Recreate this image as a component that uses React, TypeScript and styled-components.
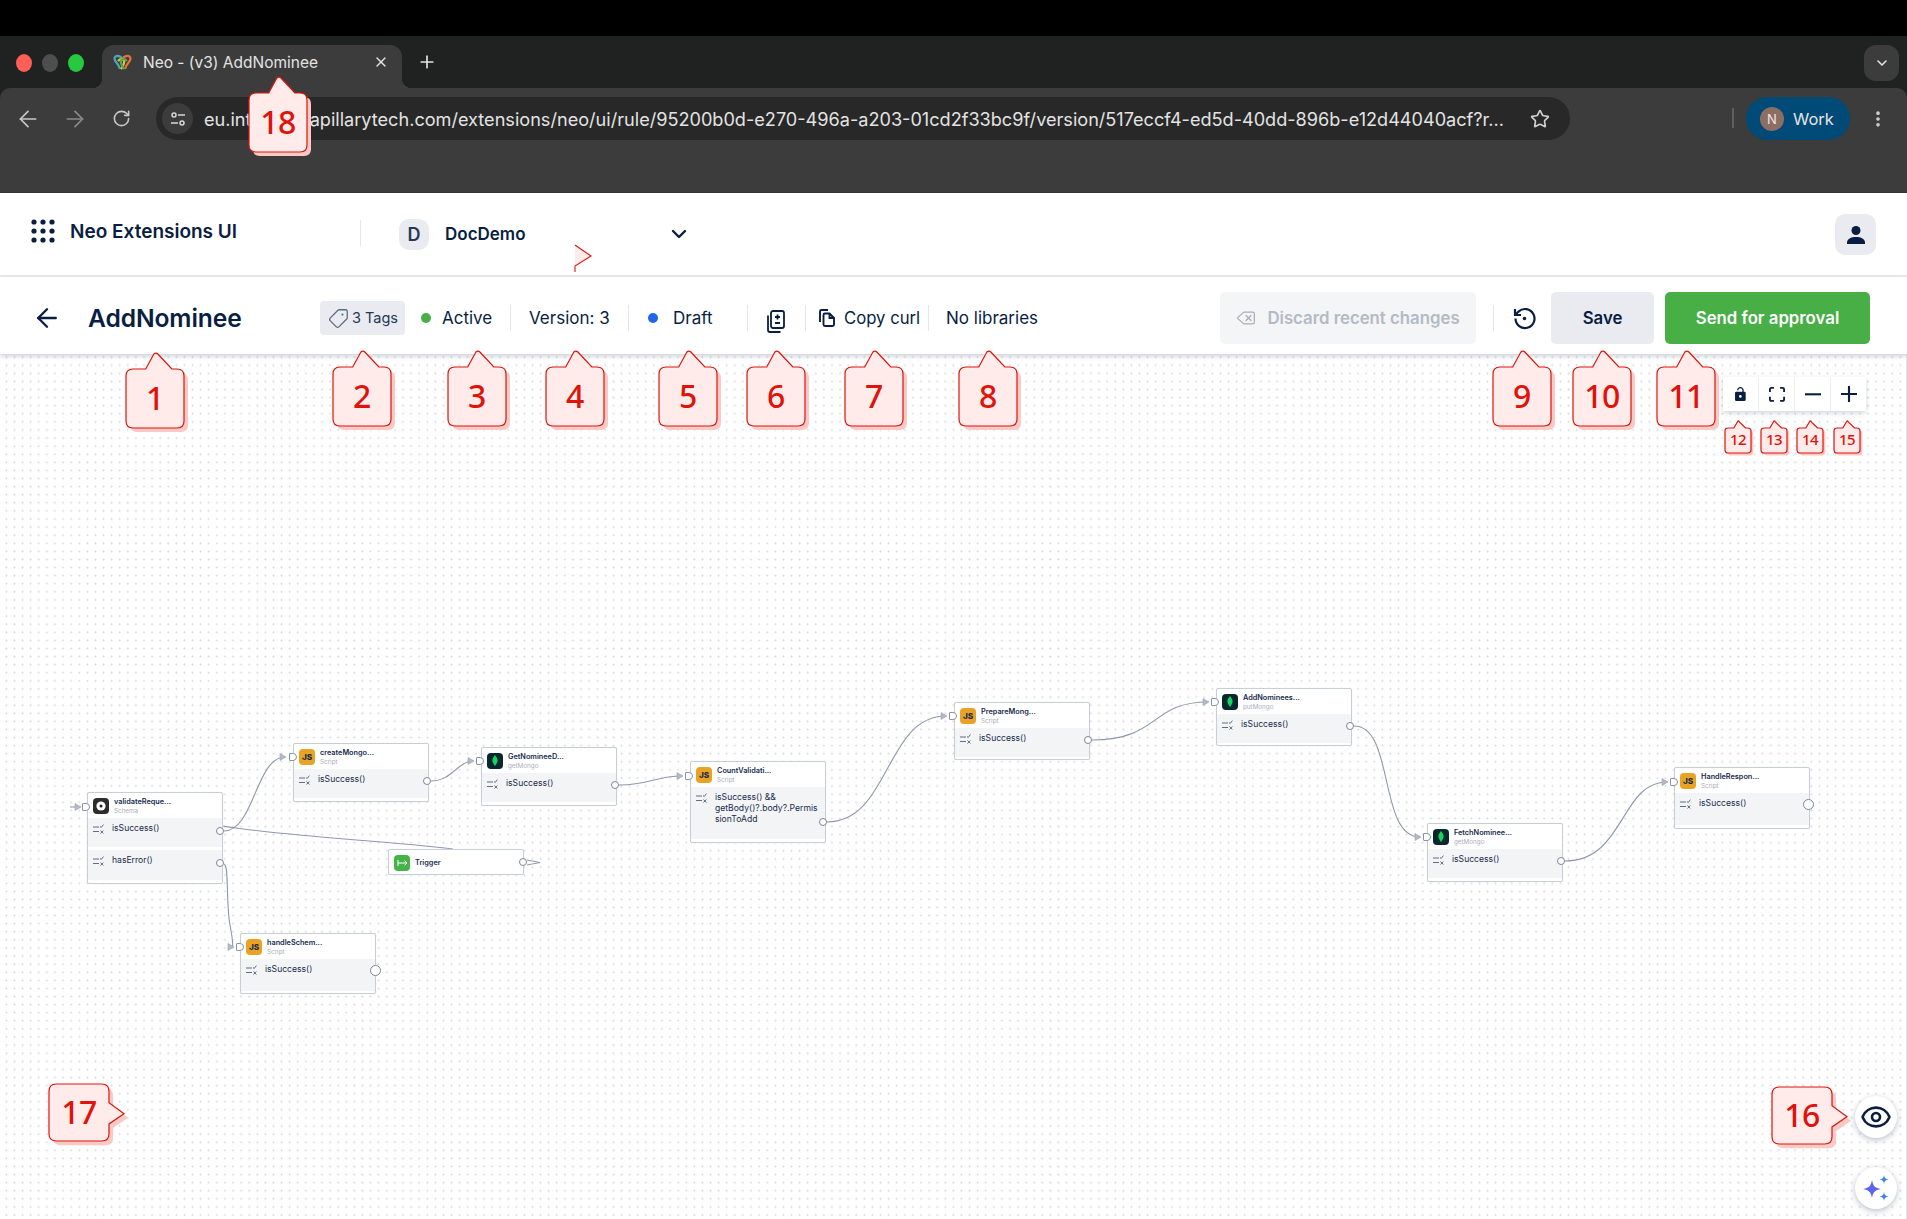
import React from "react";
import styled, { createGlobalStyle, css } from "styled-components";
import { ArrowLeft, ArrowRight, RotateCw, Star, X, Plus, ChevronDown, EllipsisVertical, Tag, Eye, Delete } from "lucide-react";

const NAVY = "#091e42";
const Global = createGlobalStyle`
  html, body { margin: 0; padding: 0; background: #fff; }
  body { font-family: "Inter", "Liberation Sans", sans-serif; color: ${NAVY}; }
  * { box-sizing: border-box; }
`;

const Page = styled.div`
  position: relative; width: 1907px; height: 1219px; overflow: hidden;
  display: flex; flex-direction: column; background: #fff;
`;
const BlackBar = styled.div`height: 36px; background: #000; flex: none;`;
const BrowserChrome = styled.div`flex: none; background: #202221;`;
const TabStrip = styled.div`
  height: 52px; display: flex; align-items: flex-end;
  padding: 0 8px 0 102px; position: relative;
`;
const Lights = styled.div`position: absolute; left: 16px; top: 18px; display: flex; gap: 10px;`;
const Light = styled.span<{ $c: string }>`width: 16px; height: 18px; border-radius: 50%; background: ${p => p.$c};`;
const TabItem = styled.div`
  position: relative; width: 300px; height: 43px; background: #3c3c3c; border-radius: 12px 12px 0 0;
  display: flex; align-items: center; padding: 0 13px 9px 11px; color: #e3e3e3;
  font: 400 15.5px "Inter", "Liberation Sans", sans-serif;
  &::before, &::after { content: ""; position: absolute; bottom: 0; width: 10px; height: 10px; }
  &::before { left: -10px; background: radial-gradient(circle at 0 0, #202221 10px, #3c3c3c 10.5px); }
  &::after { right: -10px; background: radial-gradient(circle at 100% 0, #202221 10px, #3c3c3c 10.5px); }
`;
const TabTitle = styled.span`flex: 1; margin-left: 11px;`;
const NewTab = styled.span`display: flex; margin: 0 0 16px 15px; align-self: flex-end; color: #e3e3e3;`;
const TabMenu = styled.div`
  margin-left: auto; align-self: flex-start; margin-top: 9px; width: 35px; height: 36px; border-radius: 12px;
  background: #3c3c3c; color: #e3e3e3; display: flex; align-items: center; justify-content: center;
`;
const Toolbar = styled.div`
  height: 105px; background: #3c3c3c; display: flex; align-items: flex-start; border-radius: 10px 10px 0 0;
  padding: 9px 0 0 0; color: #c7c7c7; border-bottom: 1px solid #333; position: relative;
`;
const NavSlot = styled.span<{ $dim?: boolean }>`
  width: 46.5px; height: 43px; display: flex; align-items: center; justify-content: center; flex: none;
  color: ${p => (p.$dim ? "#8a8a8a" : "#c7c7c7")};
`;
const Nav = styled.div`display: flex; padding-left: 5px; width: 156px;`;
const Omnibox = styled.div`
  width: 1414px; height: 43px; border-radius: 22px; background: #282828; display: flex; align-items: center;
  padding: 0 16px 0 6px; flex: none;
`;
const SiteInfo = styled.span`
  width: 31px; height: 31px; border-radius: 50%; background: #3c3c3c; display: flex; align-items: center; justify-content: center; flex: none;
`;
const Url = styled.span`
  margin-left: 11px; width: 1310px; white-space: nowrap; overflow: hidden; color: #e3e3e3;
  font: 400 18.13px "Inter", "Liberation Sans", sans-serif; flex: none;
`;
const StarSlot = styled.span`margin-left: 16px; display: flex; color: #d0d0d0;`;
const ToolSep = styled.span`width: 2px; height: 20px; background: #5e5e5e; margin: 11px 12px 0 162px; flex: none;`;
const Profile = styled.div`
  width: 104px; height: 43px; border-radius: 22px; background: #004a77; display: flex; align-items: center;
  padding-left: 14px; color: #e3e3e3; font: 400 16.5px "Inter", "Liberation Sans", sans-serif; flex: none;
`;
const ProfileAvatar = styled.span`
  width: 24px; height: 24px; border-radius: 50%; background: #8d6e63; color: #f1e7e3; font-size: 13px;
  display: flex; align-items: center; justify-content: center; margin-right: 9px;
`;
const MoreSlot = styled.span`margin-left: 18px; height: 43px; display: flex; align-items: center; color: #d0d0d0;`;

const Header = styled.header`
  height: 84px; flex: none; background: #fff; border-bottom: 2px solid #ebecf0; display: flex; align-items: flex-start;
  padding: 21px 31px 0 31px;
`;
const DotsSlot = styled.span`display: flex; margin-top: 5px;`;
const AppName = styled.div`
  margin-left: 15px; width: 291px; border-right: 1px solid #e4e6ea; height: 26px; margin-top: 6px; padding-top: 2px;
  font-weight: 600; font-size: 19px; line-height: 20px; color: ${NAVY};
`;
const Org = styled.div`margin-left: 38px; display: flex; align-items: center; height: 40px; width: 292px; font-weight: 600; font-size: 17px;`;
const OrgAvatar = styled.span`
  width: 30px; height: 31px; border-radius: 10px; background: #e9ebf0; display: flex; align-items: center; justify-content: center;
  margin-right: 16px; font-weight: 600; font-size: 18px; color: #253858;
`;
const OrgName = styled.span`flex: 1;`;
const UserBtn = styled.div`
  margin-left: auto; width: 41px; height: 41px; border-radius: 10px; background: #e9ebf0; display: flex; align-items: center; justify-content: center;
`;

const Bar = styled.div`
  height: 77px; flex: none; background: #fff; display: flex; align-items: center; padding: 5px 37px 0; position: relative; z-index: 2;
  box-shadow: 0 2px 5px rgba(9, 30, 66, 0.22);
`;
const BackSlot = styled.span`display: flex; width: 51px; flex: none; margin-left: -5px; margin-right: 5px;`;
const Title = styled.h1`margin: 0; width: 232px; flex: none; font-size: 24.6px; font-weight: 600; color: ${NAVY}; letter-spacing: -0.1px;`;
const TagChip = styled.div`
  width: 85px; height: 34px; border-radius: 4px; background: #e9ebf0; display: flex; align-items: center; gap: 3px;
  padding-left: 8px; font-size: 14.5px; line-height: 16px; color: #253858; flex: none; white-space: nowrap;
`;
const Meta = styled.div<{ $w: number; $pad: number; $last?: boolean }>`
  width: ${p => p.$w}px; padding-left: ${p => p.$pad}px; height: 26px; display: flex; align-items: center; flex: none; white-space: nowrap;
  font-size: 17px; font-weight: 400; color: ${NAVY};
  ${p => !p.$last && css`border-right: 1px solid #e4e6ea;`}
`;
const Dot = styled.span<{ $c: string }>`width: 10px; height: 10px; border-radius: 50%; background: ${p => p.$c}; margin-right: 11px; flex: none;`;
const DraftDot = styled(Dot)`margin-right: 15px;`;
const DocSvg = styled.svg`margin-top: 6px; flex: none;`;
const CopySvg = styled.svg`margin-right: 9px; flex: none;`;
const CopyText = styled.span`font-size: 16.7px;`;
const Actions = styled.div`margin-left: auto; display: flex; align-items: center;`;
const baseBtn = css`height: 52px; border-radius: 5px; display: flex; align-items: center; justify-content: center; font-size: 16.8px; font-weight: 600; flex: none;`;
const DiscardBtn = styled.div`
  ${baseBtn}; width: 256px; background: #f4f5f7; color: #b3bac5; gap: 11px;
`;
const ActSep = styled.span`width: 1px; height: 26px; background: #e4e6ea; margin: 0 18px 0 17px;`;
const HistSlot = styled.span`display: flex; width: 25px; margin-right: 14px;`;
const SaveBtn = styled.div`${baseBtn}; width: 103px; background: #e9ebf0; color: ${NAVY}; margin-right: 11px;`;
const SendBtn = styled.div`${baseBtn}; width: 205px; background: #47af46; color: #fff;`;

const Canvas = styled.main`
  position: relative; flex: 1; overflow: hidden;
  background-color: #fff;
  background-image: radial-gradient(circle, #d9dbde 0.8px, transparent 1.1px);
  background-size: 8.1px 8.1px;
  background-position: 2.35px -0.95px;
`;
const Edges = styled.svg`position: absolute; inset: 0; width: 100%; height: 100%;`;

const NodeBox = styled.div<{ $x: number; $y: number; $h: number }>`
  position: absolute; left: ${p => p.$x}px; top: ${p => p.$y}px; width: 136px; height: ${p => p.$h}px;
  background: #fff; border: 1px solid #c9cdd8; border-radius: 2px; box-shadow: 0 0 1px #dfe1e6;
`;
const NodeHead = styled.div`height: 25px; display: flex; align-items: center; padding-left: 5px;`;
const NodeIcon = styled.span<{ $bg: string }>`
  width: 16px; height: 16px; border-radius: 4px; background: ${p => p.$bg}; display: flex; align-items: center; justify-content: center; flex: none;
  color: #172b4d; font: 800 8.2px "Inter", sans-serif;
`;
const NodeText = styled.div`margin-left: 5px; display: flex; flex-direction: column; gap: 1px; min-width: 0;`;
const NodeName = styled.div`font-size: 7.3px; line-height: 9px; font-weight: 600; color: #172b4d; white-space: nowrap;`;
const NodeKind = styled.div`font-size: 6.3px; line-height: 8px; color: #a5adba; white-space: nowrap;`;
const NodeRow = styled.div<{ $h: number }>`
  height: ${p => p.$h}px; background: #f3f4f6; display: flex; align-items: flex-start; padding: 5px 6px 0 5px; gap: 8px;
  font-size: 8.6px; line-height: 11px; color: #172b4d; margin-bottom: 3px;
`;
const RowText = styled.span`overflow-wrap: anywhere; flex: 1;`;
const RowGlyph = styled.svg`width: 11px; height: 10px; flex: none; margin-top: 1px;`;
const TargetHandle = styled.span<{ $x: number; $y: number }>`
  position: absolute; left: ${p => p.$x}px; top: ${p => p.$y}px; width: 8px; height: 8px; background: #fff;
  border: 1px solid #8993a4; border-radius: 1px 4px 4px 1px; z-index: 2;
`;
const SourceHandle = styled.span<{ $x: number; $y: number; $big?: boolean }>`
  position: absolute; left: ${p => p.$x}px; top: ${p => p.$y}px; width: ${p => (p.$big ? 11 : 8)}px; height: ${p => (p.$big ? 11 : 8)}px;
  background: #fff; border: 1px solid #7a869a; border-radius: 50%; z-index: 2;
`;

const Controls = styled.div`
  position: absolute; left: 1723px; top: 23px; width: 143px; height: 34px; background: #fff; display: flex;
  box-shadow: 0 2px 5px rgba(9, 30, 66, 0.18); z-index: 3;
`;
const ControlBtn = styled.div`
  flex: 1; display: flex; align-items: center; justify-content: center; color: ${NAVY};
  & + & { border-left: 1px solid #eee; }
`;
const Fab = styled.div<{ $y: number }>`
  position: absolute; left: 1855px; top: ${p => p.$y}px; width: 42px; height: 42px; border-radius: 50%; background: #fff;
  display: flex; align-items: center; justify-content: center; box-shadow: 0 2px 6px rgba(9, 30, 66, 0.28); z-index: 3;
`;
const EdgeLine = styled.div`position: absolute; right: 0; top: 0; bottom: 0; width: 1px; background: #e4e6ea;`;

const CalloutLayer = styled.div`position: absolute; inset: 0; pointer-events: none; z-index: 10;`;
const CalloutBox = styled.div<{ $x: number; $y: number; $w: number; $h: number }>`
  position: absolute; left: ${p => p.$x}px; top: ${p => p.$y}px; width: ${p => p.$w}px; height: ${p => p.$h}px;
`;
const CalloutShape = styled.svg`position: absolute; left: -20px; top: -20px; overflow: visible;`;
const CalloutNum = styled.span<{ $s: number }>`
  position: absolute; inset: 0 0 2px; display: flex; align-items: center; justify-content: center;
  font: 500 ${p => p.$s}px/1 "Noto Sans", "Open Sans", sans-serif; color: #e0120a; letter-spacing: -0.5px;
`;
const TailMark = styled.svg`position: absolute; left: 570px; top: 240px; width: 30px; height: 40px;`;

function calloutPath(w: number, h: number, dir: "up" | "right", s: number) {
  const r = 7 * s;
  if (dir === "up") {
    const a = w * 0.34, p = w * 0.515, b = w * 0.79, t = 16 * s;
    return `M${r} 0H${a}L${p - 2 * s} ${-t + 1}Q${p} ${-t - 1} ${p + 2 * s} ${-t + 1}L${b} 0H${w - r}Q${w} 0 ${w} ${r}V${h - r}Q${w} ${h} ${w - r} ${h}H${r}Q0 ${h} 0 ${h - r}V${r}Q0 0 ${r} 0Z`;
  }
  const a = h * 0.33, p = h * 0.52, b = h * 0.7, t = 15;
  return `M${r} 0H${w - r}Q${w} 0 ${w} ${r}V${a}L${w + t} ${p}L${w} ${b}V${h - r}Q${w} ${h} ${w - r} ${h}H${r}Q0 ${h} 0 ${h - r}V${r}Q0 0 ${r} 0Z`;
}

const Callout = ({ n, x, y, w = 58, h = 59, dir = "up", size = 32 }: { n: number; x: number; y: number; w?: number; h?: number; dir?: "up" | "right"; size?: number }) => {
  const s = w / 58;
  const d = calloutPath(w, h, dir, s);
  return (
    <CalloutBox $x={x} $y={y} $w={w} $h={h}>
      <CalloutShape width={w + 60} height={h + 40} viewBox={`-20 -20 ${w + 60} ${h + 40}`}>
        <path d={d} fill="#f9c9c6" transform={`translate(${4 * Math.max(s, 0.6)} ${4 * Math.max(s, 0.6)})`} />
        <path d={d} fill="#ffecea" stroke="#e0120a" strokeWidth="1.2" />
      </CalloutShape>
      <CalloutNum $s={size}>{n}</CalloutNum>
    </CalloutBox>
  );
};

const JsIcon = () => <NodeIcon $bg="#e8a325">JS</NodeIcon>;
const MongoIcon = () => (
  <NodeIcon $bg="#07282d">
    <svg width="6" height="11" viewBox="0 0 6 11"><path d="M3 0C4.8 2.4 5.6 4 5.6 5.5S4.4 9 3 11C1.6 9 .4 7 .4 5.5S1.2 2.4 3 0Z" fill="#13d663" /></svg>
  </NodeIcon>
);
const SchemaIcon = () => (
  <NodeIcon $bg="#2c2c2c">
    <svg width="12" height="12" viewBox="0 0 12 12"><circle cx="6" cy="6" r="4.6" fill="#fff" /><circle cx="6" cy="6" r="1.5" fill="#222" /></svg>
  </NodeIcon>
);
const TriggerIcon = () => (
  <NodeIcon $bg="#46b34a">
    <svg width="11" height="8" viewBox="0 0 11 8" fill="none" stroke="#fff" strokeWidth="1"><path d="M1 1v6M1 4h9M7.5 1.8 10 4 7.5 6.2" /></svg>
  </NodeIcon>
);
const RowIcon = () => (
  <RowGlyph viewBox="0 0 11 10" fill="none" stroke="#5e6c84" strokeWidth="1">
    <path d="M0 3h6M0 7.5h6M7 2.5l1.2 1L10.4.6M7.5 6.5l2.8 3M10.3 6.5l-2.8 3" />
  </RowGlyph>
);

type Icon = "js" | "mongo" | "schema";
const nodes: { name: string; kind: string; icon: Icon; x: number; y: number; h: number; rows: { t: string; h: number }[]; tx: number; ty: number; src: { x: number; y: number; big?: boolean }[] }[] = [
  { name: "validateReque...", kind: "Schema", icon: "schema", x: 87, y: 792, h: 92, rows: [{ t: "isSuccess()", h: 29 }, { t: "hasError()", h: 30 }], tx: 82, ty: 803, src: [{ x: 216, y: 827 }, { x: 216, y: 859 }] },
  { name: "createMongo...", kind: "Script", icon: "js", x: 293, y: 743, h: 59, rows: [{ t: "isSuccess()", h: 29 }], tx: 289, ty: 753, src: [{ x: 423, y: 777 }] },
  { name: "GetNomineeD...", kind: "getMongo", icon: "mongo", x: 481, y: 747, h: 59, rows: [{ t: "isSuccess()", h: 29 }], tx: 476, ty: 757, src: [{ x: 611, y: 781 }] },
  { name: "CountValidati...", kind: "Script", icon: "js", x: 690, y: 761, h: 82, rows: [{ t: "isSuccess() && getBody()?.body?.PermissionToAdd", h: 52 }], tx: 685, ty: 772, src: [{ x: 819, y: 818 }] },
  { name: "PrepareMong...", kind: "Script", icon: "js", x: 954, y: 702, h: 58, rows: [{ t: "isSuccess()", h: 29 }], tx: 949, ty: 712, src: [{ x: 1084, y: 736 }] },
  { name: "AddNominees...", kind: "putMongo", icon: "mongo", x: 1216, y: 688, h: 58, rows: [{ t: "isSuccess()", h: 29 }], tx: 1211, ty: 698, src: [{ x: 1346, y: 722 }] },
  { name: "FetchNominee...", kind: "getMongo", icon: "mongo", x: 1427, y: 823, h: 59, rows: [{ t: "isSuccess()", h: 29 }], tx: 1423, ty: 833, src: [{ x: 1557, y: 857 }] },
  { name: "HandleRespon...", kind: "Script", icon: "js", x: 1674, y: 767, h: 62, rows: [{ t: "isSuccess()", h: 32 }], tx: 1670, ty: 778, src: [{ x: 1803, y: 799, big: true }] },
  { name: "handleSchem...", kind: "Script", icon: "js", x: 240, y: 933, h: 61, rows: [{ t: "isSuccess()", h: 32 }], tx: 236, ty: 943, src: [{ x: 370, y: 965, big: true }] },
];

const edges = [
  "M224 831C254 831 256 757 285 757",
  "M224 864C229 864 226 905 230 925S232 947 233 947",
  "M431 781C452 781 458 761 473 761",
  "M619 785C650 785 655 776 682 776",
  "M827 822C890 822 885 716 946 716",
  "M1092 740C1160 740 1150 702 1208 702",
  "M1354 726C1395 726 1378 837 1420 837",
  "M1565 861C1625 861 1620 782 1667 782",
  "M222 826C300 838 380 840 453 849",
  "M70 807H79",
];
const arrows = [[285, 757], [473, 761], [682, 776], [946, 716], [1208, 702], [1420, 837], [1667, 782], [233, 947], [80, 807]];

const Dots = () => (
  <svg width="24" height="24" viewBox="0 0 24 24" fill={NAVY}>
    {[3, 12, 21].flatMap(y => [3, 12, 21].map(x => <circle key={`${x}-${y}`} cx={x} cy={y} r="2.6" />))}
  </svg>
);

export default function App() {
  return (
    <Page>
      <Global />
      <BlackBar />
      <BrowserChrome>
        <TabStrip>
          <Lights>
            <Light $c="#ff5f57" /><Light $c="#4e4e4e" /><Light $c="#27c93f" />
          </Lights>
          <TabItem>
            <svg width="19" height="16" viewBox="0 0 19 16" fill="none" strokeWidth="2.2">
              <path d="M9.5 5C7 1 1.5 1 1.5 4.5 1.5 8 5 8 7 15" stroke="#48a7b8" />
              <path d="M9.5 5c2.5-4 8-4 8-.5 0 3.5-3.5 3.5-5.5 10.500" stroke="#e8703a" />
              <path d="M5 7c3-3 7-2 6 2-.5 2.500-1.500 4-3 6" stroke="#e2c33c" />
              <path d="M14 7C11 4 7 5 8 9c.5 2.500 1.500 4 3 6" stroke="#55a84f" />
            </svg>
            <TabTitle>Neo - (v3) AddNominee</TabTitle>
            <X size={16} strokeWidth={2} />
          </TabItem>
          <NewTab><Plus size={20} strokeWidth={2} /></NewTab>
          <TabMenu><ChevronDown size={16} strokeWidth={2.4} /></TabMenu>
        </TabStrip>
        <Toolbar>
          <Nav>
            <NavSlot><ArrowLeft size={26} strokeWidth={1.6} /></NavSlot>
            <NavSlot $dim><ArrowRight size={26} strokeWidth={1.6} /></NavSlot>
            <NavSlot><RotateCw size={19} /></NavSlot>
          </Nav>
          <Omnibox>
            <SiteInfo>
              <svg width="18" height="18" viewBox="0 0 18 18" fill="none" stroke="#d8d8d8" strokeWidth="1.5">
                <circle cx="5" cy="5" r="2" /><path d="M9 5h7M2 13h7" /><circle cx="13" cy="13" r="2" />
              </svg>
            </SiteInfo>
            <Url>eu.intouch.capillarytech.com/extensions/neo/ui/rule/95200b0d-e270-496a-a203-01cd2f33bc9f/version/517eccf4-ed5d-40dd-896b-e12d44040acf?r...</Url>
            <StarSlot><Star size={20} /></StarSlot>
          </Omnibox>
          <ToolSep />
          <Profile>
            <ProfileAvatar>N</ProfileAvatar>
            Work
          </Profile>
          <MoreSlot><EllipsisVertical size={20} strokeWidth={2.4} /></MoreSlot>
        </Toolbar>
      </BrowserChrome>
      <Header>
        <DotsSlot><Dots /></DotsSlot>
        <AppName>Neo Extensions UI</AppName>
        <Org>
          <OrgAvatar>D</OrgAvatar>
          <OrgName>DocDemo</OrgName>
          <ChevronDown size={24} strokeWidth={2.4} />
        </Org>
        <UserBtn>
          <svg width="22" height="22" viewBox="0 0 22 22" fill={NAVY}>
            <circle cx="11" cy="6.5" r="4.5" />
            <path d="M2 20v-1.5C2 15 6 13 11 13s9 2 9 5.500V20Z" />
          </svg>
        </UserBtn>
      </Header>
      <Bar>
        <BackSlot><ArrowLeft size={30} strokeWidth={1.9} color={NAVY} /></BackSlot>
        <Title>AddNominee</Title>
        <TagChip>
          <Tag size={21} strokeWidth={1.5} color="#5e6c84" style={{ transform: "rotate(90deg)" }} />
          3 Tags
        </TagChip>
        <Meta $w={106} $pad={16}><Dot $c="#47af46" />Active</Meta>
        <Meta $w={118} $pad={18}>Version: 3</Meta>
        <Meta $w={119} $pad={19}><DraftDot $c="#2563eb" />Draft</Meta>
        <Meta $w={58} $pad={19}>
          <DocSvg width="18" height="23" viewBox="0 0 18 23" fill="none" stroke={NAVY} strokeWidth="1.8">
            <rect x="4" y="1" width="13" height="17" rx="2" />
            <path d="M1 5.500V20A2 2 0 0 0 3 22H13.500M10.500 4.500v5M8 7h5M8 13h5" />
          </DocSvg>
        </Meta>
        <Meta $w={123} $pad={13}>
          <CopySvg width="16" height="18" viewBox="0 0 16 18" fill="none" stroke={NAVY} strokeWidth="1.9">
            <path d="M1 13V2.500A1.500 1.500 0 0 1 2.500 1H9" />
            <path d="M4.500 6A1.500 1.500 0 0 1 6 4.500h4.500L15 9v6.500a1.500 1.500 0 0 1-1.500 1.500H6a1.500 1.500 0 0 1-1.500-1.500Z" />
            <path d="M10.500 4.500V9H15" />
          </CopySvg>
          <CopyText>Copy curl</CopyText>
        </Meta>
        <Meta $w={120} $pad={17} $last>No libraries</Meta>
        <Actions>
          <DiscardBtn>
            <Delete size={20} strokeWidth={1.5} color="#a5adba" />
            Discard recent changes
          </DiscardBtn>
          <ActSep />
          <HistSlot>
            <svg width="25" height="25" viewBox="0 0 25 25" fill="none" stroke={NAVY} strokeWidth="2.2">
              <path d="M3.500 12.500a9.500 9.500 0 1 0 3-6.900L3 9" />
              <path d="M3 3v6h6" />
              <circle cx="12.500" cy="12.500" r="1.800" fill={NAVY} stroke="none" />
            </svg>
          </HistSlot>
          <SaveBtn>Save</SaveBtn>
          <SendBtn>Send for approval</SendBtn>
        </Actions>
      </Bar>
      <Canvas>
        <Edges viewBox="0 354 1907 865" fill="none">
          {edges.map(d => <path key={d} d={d} stroke="#8f98ab" strokeWidth="1.1" />)}
          {arrows.map(([x, y]) => <path key={`${x}-${y}`} d={`M${x - 5} ${y - 3.5}L${x + 1} ${y}L${x - 5} ${y + 3.5}Z`} fill="#b3b9c6" stroke="#9aa2b3" strokeWidth="0.6" />)}
          <path d="M527 860L540 862.500L527 865" stroke="#8f98ab" strokeWidth="1" fill="#fff" />
        </Edges>
        {nodes.map(n => (
          <React.Fragment key={n.name}>
            <NodeBox $x={n.x} $y={n.y - 354} $h={n.h}>
              <NodeHead>
                {n.icon === "js" ? <JsIcon /> : n.icon === "mongo" ? <MongoIcon /> : <SchemaIcon />}
                <NodeText>
                  <NodeName>{n.name}</NodeName>
                  <NodeKind>{n.kind}</NodeKind>
                </NodeText>
              </NodeHead>
              {n.rows.map(r => (
                <NodeRow key={r.t} $h={r.h}>
                  <RowIcon />
                  <RowText>{r.t}</RowText>
                </NodeRow>
              ))}
            </NodeBox>
            <TargetHandle $x={n.tx} $y={n.ty - 354} />
            {n.src.map(s => <SourceHandle key={s.y} $x={s.x} $y={s.y - 354} $big={s.big} />)}
          </React.Fragment>
        ))}
        <NodeBox $x={388} $y={849 - 354} $h={26}>
          <NodeHead>
            <TriggerIcon />
            <NodeText><NodeName>Trigger</NodeName></NodeText>
          </NodeHead>
        </NodeBox>
        <SourceHandle $x={519} $y={858 - 354} />
        <Controls>
          <ControlBtn>
            <svg width="11" height="14" viewBox="0 0 25 32" fill={NAVY}><path d="M21.333 10.667H19.81V7.619C19.81 3.429 16.38 0 12.19 0c-4.114 0-7.543 3.429-7.543 7.619h3.048c0-2.59 1.905-4.724 4.495-4.724 2.59 0 4.572 2.133 4.572 4.724v3.048H3.048A3.056 3.056 0 000 13.714v15.238A3.056 3.056 0 003.048 32h18.285a3.056 3.056 0 003.048-3.048V13.714a3.056 3.056 0 00-3.048-3.047zM12.19 24.533a3.056 3.056 0 01-3.047-3.047 3.056 3.056 0 013.047-3.048 3.056 3.056 0 013.048 3.048 3.056 3.056 0 01-3.048 3.047z" /></svg>
          </ControlBtn>
          <ControlBtn>
            <svg width="16" height="15" viewBox="0 0 32 30" fill={NAVY}><path d="M3.692 4.63c0-.53.4-.938.939-.938h5.215V0H4.708C2.13 0 0 2.054 0 4.63v5.216h3.692V4.631zM27.354 0h-5.2v3.692h5.17c.53 0 .984.4.984.939v5.215H32V4.631A4.624 4.624 0 0027.354 0zm.954 24.83c0 .532-.4.94-.939.94h-5.215v3.768h5.215c2.577 0 4.631-2.13 4.631-4.707v-5.139h-3.692v5.139zm-23.677.94c-.531 0-.939-.4-.939-.94v-5.138H0v5.139c0 2.577 2.13 4.707 4.708 4.707h5.138V25.77H4.631z" /></svg>
          </ControlBtn>
          <ControlBtn>
            <svg width="16" height="3" viewBox="0 0 32 5" fill={NAVY}><path d="M0 0h32v4.2H0z" /></svg>
          </ControlBtn>
          <ControlBtn>
            <svg width="16" height="16" viewBox="0 0 32 32" fill={NAVY}><path d="M32 18.133H18.133V32h-4.266V18.133H0v-4.266h13.867V0h4.266v13.867H32z" /></svg>
          </ControlBtn>
        </Controls>
        <Fab $y={742}><Eye size={32} strokeWidth={2} color={NAVY} /></Fab>
        <Fab $y={813}>
          <svg width="28" height="28" viewBox="0 0 28 28">
            <path d="M10 6C11 12 13 14 19 15 13 16 11 18 10 24 9 18 7 16 1 15 7 14 9 12 10 6Z" fill="#5b63f6" />
            <path d="M22 1C22.500 4 23.500 5 26.500 5.500 23.500 6 22.500 7 22 10 21.500 7 20.500 6 17.500 5.500 20.500 5 21.500 4 22 1Z" fill="#3f83f8" />
            <path d="M22 18C22.500 21 23.500 22 26.500 22.500 23.500 23 22.500 24 22 27 21.500 24 20.500 23 17.500 22.500 20.500 22 21.500 21 22 18Z" fill="#3f83f8" />
          </svg>
        </Fab>
        <EdgeLine />
      </Canvas>
      <CalloutLayer>
        <TailMark viewBox="570 240 30 40"><path d="M575 245L591 256L575 266V272" fill="#ffecea" stroke="#e0120a" strokeWidth="1.1" /></TailMark>
        <Callout n={1} x={126} y={369} />
        <Callout n={2} x={333} y={367} />
        <Callout n={3} x={448} y={367} />
        <Callout n={4} x={546} y={367} />
        <Callout n={5} x={659} y={367} />
        <Callout n={6} x={747} y={367} />
        <Callout n={7} x={845} y={367} />
        <Callout n={8} x={959} y={367} />
        <Callout n={9} x={1493} y={367} />
        <Callout n={10} x={1573} y={367} />
        <Callout n={11} x={1657} y={367} />
        <Callout n={12} x={1725} y={428} w={26} h={25} size={15} />
        <Callout n={13} x={1761} y={428} w={26} h={25} size={15} />
        <Callout n={14} x={1797} y={428} w={26} h={25} size={15} />
        <Callout n={15} x={1834} y={428} w={26} h={25} size={15} />
        <Callout n={16} x={1772} y={1087} w={60} h={57} dir="right" />
        <Callout n={17} x={49} y={1084} w={60} h={57} dir="right" />
        <Callout n={18} x={249} y={93} />
      </CalloutLayer>
    </Page>
  );
}
